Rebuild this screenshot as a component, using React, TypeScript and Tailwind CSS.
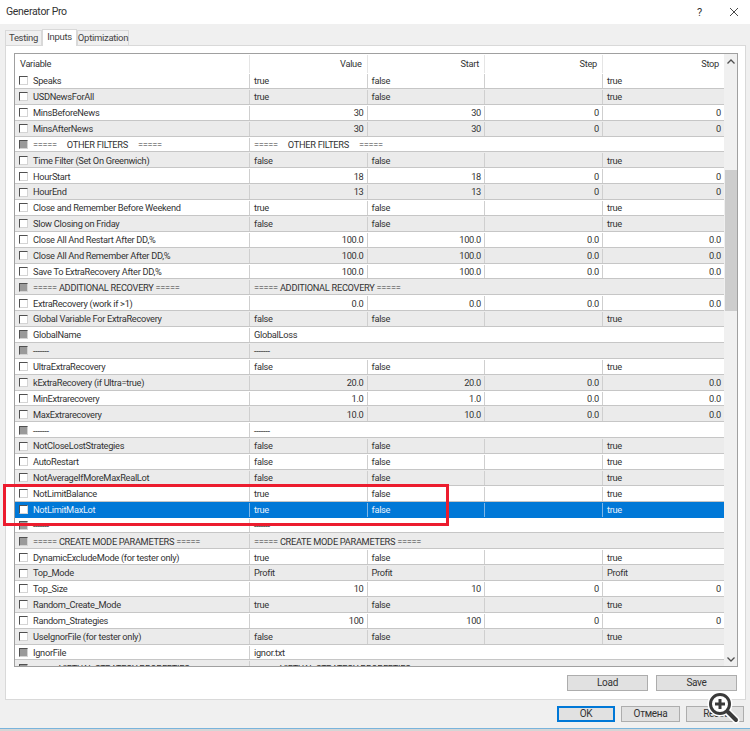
import React from "react";

type Row = { name: string; kind: "bool" | "num" | "span"; v?: string; s?: string; st?: string; e?: string };

const b = (name: string, v: string, s = "false"): Row => ({ name, kind: "bool", v, s, e: "true" });
const n = (name: string, v: string, st = "0"): Row => ({ name, kind: "num", v, s: v, st, e: st });
const sp = (name: string, text = name): Row => ({ name, kind: "span", v: text });

const rows: Row[] = [
  b("Speaks", "true"),
  b("USDNewsForAll", "true"),
  n("MinsBeforeNews", "30"),
  n("MinsAfterNews", "30"),
  sp("=====     OTHER FILTERS     ====="),
  b("Time Filter (Set On Greenwich)", "false"),
  n("HourStart", "18"),
  n("HourEnd", "13"),
  b("Close and Remember Before Weekend", "true"),
  b("Slow Closing on Friday", "false"),
  n("Close All And Restart After DD,%", "100.0", "0.0"),
  n("Close All And Remember After DD,%", "100.0", "0.0"),
  n("Save To ExtraRecovery After DD,%", "100.0", "0.0"),
  sp("===== ADDITIONAL RECOVERY ====="),
  n("ExtraRecovery (work if >1)", "0.0", "0.0"),
  b("Global Variable For ExtraRecovery", "false"),
  sp("GlobalName", "GlobalLoss"),
  sp("-------"),
  b("UltraExtraRecovery", "false"),
  n("kExtraRecovery (if Ultra=true)", "20.0", "0.0"),
  n("MinExtrarecovery", "1.0", "0.0"),
  n("MaxExtrarecovery", "10.0", "0.0"),
  sp("-------"),
  b("NotCloseLostStrategies", "false"),
  b("AutoRestart", "false"),
  b("NotAverageIfMoreMaxRealLot", "false"),
  b("NotLimitBalance", "true"),
  b("NotLimitMaxLot", "true"),
  sp("-------"),
  sp("===== CREATE MODE PARAMETERS ====="),
  b("DynamicExcludeMode (for tester only)", "true"),
  { name: "Top_Mode", kind: "bool", v: "Profit", s: "Profit", e: "Profit" },
  n("Top_Size", "10"),
  b("Random_Create_Mode", "true"),
  n("Random_Strategies", "100"),
  b("UseIgnorFile (for tester only)", "false"),
  sp("IgnorFile", "ignor.txt"),
  sp("===== VIRTUAL STRATEGY PROPERTIES ====="),
];

function Check({ gray }: { gray?: boolean }) {
  return (
    <span
      className={`ml-[4px] mr-[5px] h-[9px] w-[9px] shrink-0 border-t border-l border-t-[#505050] border-l-[#505050] border-r border-b border-r-[#d4d4d4] border-b-[#d4d4d4] ${
        gray ? "bg-[#9a9a9a]" : "bg-white"
      }`}
    />
  );
}

function TableRow({ row, index }: { row: Row; index: number }) {
  const selected = index === 27;
  const alt = index % 2 === 1;
  const bg = selected ? "bg-[#0078d7] text-[#e6f1fb]" : alt ? "bg-[#ebebeb] text-[#333333]" : "bg-white text-[#333333]";
  const div = selected ? "border-r-[#7fb6e6]" : "border-r-[#cfcfcf]";
  const cellL = `flex items-center overflow-hidden whitespace-pre pl-[4px] border-r ${div}`;
  const cellR = `flex items-center justify-end overflow-hidden pr-[3px] border-r ${div}`;
  const isNum = row.kind === "num";
  const cell = isNum ? cellR : cellL;
  return (
    <div className={`flex h-[15.89px] shrink-0 border-b pt-px ${selected ? "border-b-[#0078d7]" : "border-b-[#c6c6c6]"} ${bg}`}>
      <div className={`flex w-[235px] shrink-0 items-center overflow-hidden whitespace-pre border-r ${div}`}>
        <Check gray={row.kind === "span"} />
        <span>{row.name}</span>
      </div>
      {row.kind === "span" ? (
        <div className="flex flex-1 items-center whitespace-pre pl-[4px]">
          <span>{row.v}</span>
        </div>
      ) : (
        <>
          <div className={`${cell} w-[117.5px] shrink-0`}>{row.v}</div>
          <div className={`${cell} w-[117.5px] shrink-0`}>{row.s}</div>
          <div className={`${cell} w-[118px] shrink-0`}>{row.st}</div>
          <div className={`flex flex-1 items-center ${isNum ? "justify-end pr-[3px]" : "pl-[4px]"}`}>{row.e}</div>
        </>
      )}
    </div>
  );
}

function Btn({ label, cls }: { label: string; cls: string }) {
  return (
    <button className={`flex h-[16px] items-center justify-center border border-[#adadad] bg-[#e1e1e1] text-[10px] text-[#333333] ${cls}`}>
      {label}
    </button>
  );
}

export default function App() {
  return (
    <div
      className="relative flex h-[731px] w-[750px] flex-col overflow-hidden bg-[#f0f0f0] text-[9.25px] leading-none tracking-[-0.3px]"
      style={{ fontFamily: 'Roboto, "Liberation Sans", Arial, sans-serif' }}
    >
      {/* Title bar */}
      <div className="flex h-[24px] shrink-0 items-center bg-white pl-[6px] pr-[11px] text-[10.5px] text-[#333333]">
        <span className="flex-1">Generator Pro</span>
        <span className="mr-[27px] text-[11px]">?</span>
        <svg width="10" height="10" viewBox="0 0 10 10" className="text-[#333333]">
          <path d="M1 1 L9 9 M9 1 L1 9" stroke="currentColor" strokeWidth="0.9" fill="none" />
        </svg>
      </div>

      {/* Tabs */}
      <div className="flex h-[21px] shrink-0 items-end pl-[5px] text-[9.5px] text-[#444444]">
        <div className="flex h-[15px] w-[37px] items-center justify-center border border-b-0 border-[#d9d9d9] bg-[#f0f0f0]">Testing</div>
        <div className="z-10 -mb-px flex h-[17px] w-[35px] items-center justify-center border border-b-0 border-[#d9d9d9] bg-white pb-[2px]">Inputs</div>
        <div className="flex h-[15px] w-[52px] items-center justify-center border border-b-0 border-[#d9d9d9] bg-[#f0f0f0]">Optimization</div>
      </div>

      {/* Panel */}
      <div className="ml-[5px] flex h-[655px] w-[741px] shrink-0 flex-col border border-[#d9d9d9] bg-white pl-[8px] pr-[7px] pt-[7px]">
        <div className="flex h-[614px] w-[724px] shrink-0 border border-[#a0a0a0]">
          <div className="flex min-w-0 flex-1 flex-col overflow-hidden">
            <div className="flex h-[19px] shrink-0 items-center bg-white pt-px text-[#333333]">
              <div className="flex h-full w-[235px] shrink-0 items-center border-r border-r-[#e5e5e5] pl-[5px]">Variable</div>
              <div className="flex h-full w-[117.5px] shrink-0 items-center justify-end border-r border-r-[#e5e5e5] pr-[5px]">Value</div>
              <div className="flex h-full w-[117.5px] shrink-0 items-center justify-end border-r border-r-[#e5e5e5] pr-[5px]">Start</div>
              <div className="flex h-full w-[118px] shrink-0 items-center justify-end border-r border-r-[#e5e5e5] pr-[5px]">Step</div>
              <div className="flex h-full flex-1 items-center justify-end pr-[5px]">Stop</div>
            </div>
            {rows.map((r, i) => (
              <TableRow key={i} row={r} index={i} />
            ))}
          </div>
          {/* Scrollbar */}
          <div className="flex w-[13px] shrink-0 flex-col items-center bg-[#f0f0f0]">
            <svg width="10" height="8" viewBox="0 0 10 8" className="mt-[4px] shrink-0 text-[#505050]">
              <path d="M1.5 5.5 L5 2 L8.5 5.5" stroke="currentColor" strokeWidth="1.3" fill="none" />
            </svg>
            <div className="mt-[104px] h-[141px] w-[12px] shrink-0 bg-[#cdcdcd]" />
            <div className="flex-1" />
            <svg width="10" height="8" viewBox="0 0 10 8" className="mb-[3px] shrink-0 text-[#505050]">
              <path d="M1.5 2.5 L5 6 L8.5 2.5" stroke="currentColor" strokeWidth="1.3" fill="none" />
            </svg>
          </div>
        </div>
        <div className="mt-[8px] flex justify-end gap-[8px] pr-[1px]">
          <Btn label="Load" cls="w-[81px]" />
          <Btn label="Save" cls="w-[81px]" />
        </div>
      </div>

      {/* Bottom buttons */}
      <div className="mt-[6px] flex justify-end gap-[6px] pr-[6px]">
        <button className="flex h-[16px] w-[58px] items-center justify-center border-2 border-[#0078d7] bg-[#e1e1e1] text-[10px] text-[#333333]">OK</button>
        <Btn label="Отмена" cls="w-[59px]" />
        <Btn label="Reset" cls="w-[58px]" />
      </div>
      <div className="absolute bottom-0 left-0 h-[3px] w-full border-t border-t-[#79b4dc] bg-[#d6d6d6]" />

      {/* Red highlight */}
      <div className="pointer-events-none absolute left-[3px] top-[484px] h-[42px] w-[446px] border-[3px] border-[#ec1c2e]" />

      {/* Magnifier */}
      <svg className="absolute left-[706px] top-[690px]" width="34" height="34" viewBox="0 0 34 34">
        <circle cx="14" cy="14" r="12.5" fill="white" />
        <path d="M22 22 L30 30" stroke="white" strokeWidth="7" strokeLinecap="round" />
        <path d="M22 22 L30 30" stroke="#3a3a3a" strokeWidth="4" strokeLinecap="round" />
        <circle cx="14" cy="14" r="9.5" fill="white" stroke="#3a3a3a" strokeWidth="3" />
        <path d="M14 9 V19 M9 14 H19" stroke="#3a3a3a" strokeWidth="3" />
      </svg>
    </div>
  );
}
